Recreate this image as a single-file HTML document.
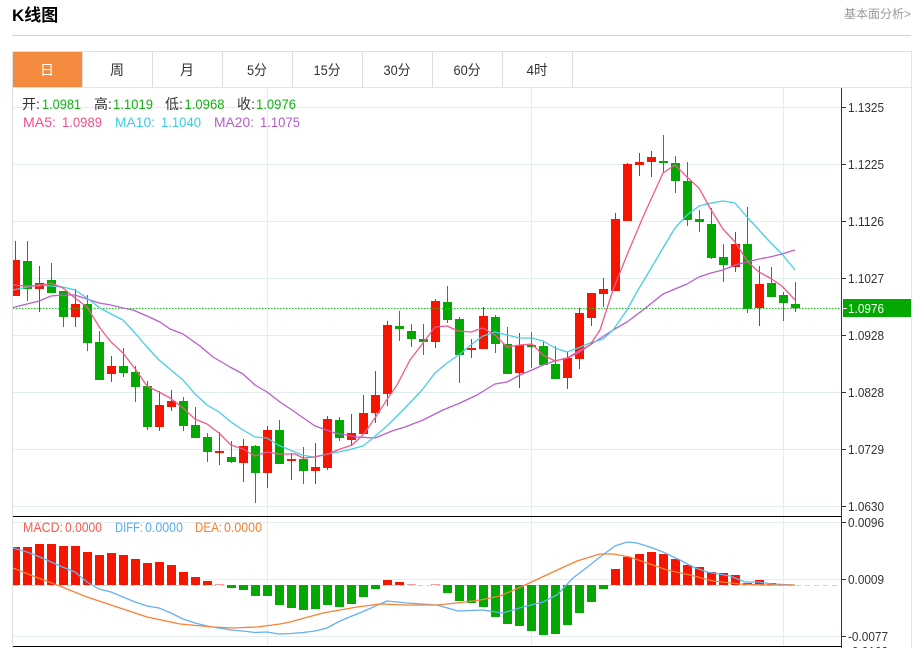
<!DOCTYPE html>
<html lang="zh"><head><meta charset="utf-8"><title>K线图</title>
<style>
html,body{margin:0;padding:0;background:#fff;width:916px;height:648px;overflow:hidden}
svg{display:block;font-family:"Liberation Sans","Noto Sans CJK SC",sans-serif}
.l{fill:none;stroke-width:1.3;stroke-linejoin:round}
.a{font-size:13px;fill:#333}
.t{font-size:14px;fill:#333;text-anchor:middle}
.s{font-size:14px}
</style></head><body>
<svg width="916" height="648" viewBox="0 0 916 648" xmlns="http://www.w3.org/2000/svg">
<defs><clipPath id="c"><rect x="13" y="88" width="828" height="560"/></clipPath></defs>
<text x="12" y="21" font-size="17" font-weight="700" fill="#000">K线图</text>
<text x="844" y="18" font-size="12" fill="#999">基本面分析&gt;</text>
<g shape-rendering="crispEdges">
<rect x="12" y="35" width="899" height="1" fill="#d0d0d0"/>
<rect x="12" y="51" width="900" height="1" fill="#e0e0e0"/>
<rect x="12" y="87" width="900" height="1" fill="#e4e4e4"/>
<rect x="12" y="51" width="1" height="597" fill="#e0e0e0"/>
<rect x="911" y="51" width="1" height="597" fill="#e4e4e4"/>
<rect x="13" y="52" width="69" height="35" fill="#f58b3f"/>
<path d="M82.5 52V87M152.5 52V87M222.5 52V87M292.5 52V87M362.5 52V87M432.5 52V87M502.5 52V87M572.5 52V87" stroke="#ddd" fill="none"/>
<path d="M13 107.5H841M13 164.5H841M13 221.5H841M13 278.5H841M13 335.5H841M13 392.5H841M13 449.5H841M13 506.5H841M13 522.5H841M13 579.5H841M13 636.5H841M267.5 88V646M531.5 88V646M783.5 88V646" stroke="#e3ecf3" fill="none"/>
</g>
<text class="t" x="47" y="75" style="fill:#fff">日</text>
<text class="t" x="117" y="75">周</text>
<text class="t" x="187" y="75">月</text>
<text class="t" x="257" y="75" textLength="20" lengthAdjust="spacingAndGlyphs">5分</text>
<text class="t" x="327" y="75" textLength="27" lengthAdjust="spacingAndGlyphs">15分</text>
<text class="t" x="397" y="75" textLength="27" lengthAdjust="spacingAndGlyphs">30分</text>
<text class="t" x="467" y="75" textLength="27" lengthAdjust="spacingAndGlyphs">60分</text>
<text class="t" x="537" y="75" textLength="21" lengthAdjust="spacingAndGlyphs">4时</text>

<g clip-path="url(#c)" shape-rendering="crispEdges">
<path fill="none" stroke="#f51500" d="M15.5 241V296M39.5 266V312M75.5 289V327M111.5 356V382M159.5 391V431M171.5 390V411M219.5 432V465M243.5 439V482M267.5 426V488M291.5 453V480M315.5 443V484M327.5 416V470M351.5 414V446M363.5 395V434M375.5 371V423M387.5 321V406M435.5 299V348M471.5 339V358M483.5 307V349M519.5 333V388M567.5 352V389M579.5 308V369M591.5 293V326M603.5 278V307M615.5 213V291M627.5 163V221M639.5 153V176M651.5 151V177M735.5 232V272M759.5 266V326"/>
<path fill="none" stroke="#03a803" d="M27.5 241V301M51.5 263V293M63.5 291V327M87.5 295V351M99.5 331V380M123.5 348V377M135.5 366V402M147.5 381V430M183.5 397V431M195.5 407V438M207.5 433V462M231.5 441V463M255.5 445V503M279.5 420V464M303.5 447V484M339.5 417V441M399.5 311V341M411.5 324V347M423.5 324V355M447.5 286V323M459.5 317V383M495.5 315V353M507.5 327V374M531.5 332V368M543.5 341V365M555.5 346V379M663.5 135V173M675.5 156V193M687.5 162V226M699.5 210V232M711.5 208V259M723.5 244V282M747.5 207V313M771.5 267V297M783.5 292V321M795.5 282V312"/>
<path fill="#f51500" d="M11 260h9v36h-9zM35 283h9v6h-9zM71 304h9v13h-9zM107 366h9v8h-9zM155 405h9v22h-9zM167 401h9v6h-9zM215 451h9v2h-9zM239 446h9v17h-9zM263 430h9v43h-9zM287 459h9v2h-9zM311 467h9v4h-9zM323 419h9v49h-9zM347 433h9v7h-9zM359 413h9v21h-9zM371 395h9v18h-9zM383 325h9v69h-9zM431 301h9v41h-9zM467 348h9v2h-9zM479 316h9v33h-9zM515 345h9v28h-9zM563 358h9v20h-9zM575 313h9v46h-9zM587 293h9v25h-9zM599 289h9v5h-9zM611 219h9v72h-9zM623 164h9v57h-9zM635 162h9v3h-9zM647 157h9v5h-9zM731 244h9v23h-9zM755 284h9v24h-9z"/>
<path fill="#03a803" d="M23 261h9v28h-9zM47 280h9v13h-9zM59 291h9v26h-9zM83 304h9v39h-9zM95 342h9v38h-9zM119 366h9v7h-9zM131 372h9v15h-9zM143 386h9v41h-9zM179 401h9v25h-9zM191 425h9v13h-9zM203 437h9v15h-9zM227 457h9v5h-9zM251 446h9v27h-9zM275 430h9v34h-9zM299 459h9v12h-9zM335 420h9v18h-9zM395 326h9v3h-9zM407 331h9v8h-9zM419 339h9v3h-9zM443 302h9v18h-9zM455 319h9v36h-9zM491 317h9v27h-9zM503 344h9v30h-9zM527 345h9v2h-9zM539 346h9v19h-9zM551 364h9v15h-9zM659 161h9v2h-9zM671 163h9v18h-9zM683 181h9v39h-9zM695 219h9v3h-9zM707 224h9v34h-9zM719 257h9v8h-9zM743 244h9v65h-9zM767 283h9v14h-9zM779 295h9v8h-9zM791 304h9v4h-9z"/>
</g>
<path d="M13 308.5H841" stroke="#1fc21f" stroke-dasharray="1.5 1.5" fill="none"/>
<g clip-path="url(#c)">
<path class="l" stroke="#b95fcf" d="M13 307.5L27 304L39 301L51 296L63 295L75 295L87 299L99 303L111 305L123 308L133 310L147 316L160 322L170 329L183 334L200 346L213 357L230 367L243 374L255 385L267 392L280 402L292 410L302 417L315 426L335 433L357 437L375 438L392 431L405 427L423 420L443 410L460 403L477 395L495 384L507 382L520 375L532 370L543 365L555 361L567 358L578 353L590 345L613 330L627 322L643 310L663 294L675 289L687 284L699 277L711 273L723 270L735 265L747 262L759 259L770 257L782 254L795 250"/>
<path class="l" stroke="#45cfe3" d="M13 290L27 287L39 285L51 286L63 287L75 290L87 298L100 308L111 314L123 320L135 333L147 347L159 360L171 370L183 380L195 394L207 405L219 412L231 422L243 430L255 437L267 438L278 445L290 450L302 455L313 457L328 454L348 450L363 446L373 438L388 425L405 408L422 390L435 373L447 363L460 354L472 344L483 336L495 332L507 335L520 338L532 338L543 341L555 348L567 352L578 348L590 343L603 339L613 330L627 310L638 290L650 270L663 248L675 228L687 215L699 206L711 203L723 201L735 203L747 217L759 230L770 242L782 254L795 270"/>
<path class="l" stroke="#f4598a" d="M13 285L27 286L39 286L51 283L63 288L75 298L87 307L100 328L111 342L123 353L136 370L147 386L159 392L170 398L183 408L195 419L207 424L219 433L231 445L243 449L255 456L267 452L279 454L295 454L303 458L315 457L328 454L340 449L352 445L363 435L375 418L388 398L397 385L410 360L423 343L435 327L447 326L458 331L471 332L483 328L495 335L507 347L520 345L532 344L543 355L555 361L567 358L577 352L590 345L600 330L613 290L627 255L643 217L663 173L675 165L687 177L699 188L710 208L723 229L735 242L748 262L759 272L770 278L782 286L795 300"/>
</g>

<g shape-rendering="crispEdges" clip-path="url(#c)">
<path d="M13 516.5H841M13 646.5H841" stroke="#000" fill="none"/>
<path d="M13 585.5H841" stroke="#aedcf2" stroke-dasharray="5 4" fill="none"/>
<path fill="#f51500" d="M11 547h9v38h-9zM23 547h9v38h-9zM35 544h9v41h-9zM47 544h9v41h-9zM59 546h9v39h-9zM71 546h9v39h-9zM83 552h9v33h-9zM95 555h9v30h-9zM107 553h9v32h-9zM119 555h9v30h-9zM131 559h9v26h-9zM143 563h9v22h-9zM155 562h9v23h-9zM167 565h9v20h-9zM179 572h9v13h-9zM191 577h9v8h-9zM203 581h9v4h-9zM383 580h9v5h-9zM395 582h9v3h-9zM611 569h9v16h-9zM623 557h9v28h-9zM635 554h9v31h-9zM647 552h9v33h-9zM659 554h9v31h-9zM671 559h9v26h-9zM683 565h9v20h-9zM695 567h9v18h-9zM707 572h9v13h-9zM719 573h9v12h-9zM731 575h9v10h-9zM743 583h9v2h-9zM755 580h9v5h-9zM767 583h9v2h-9z"/>
<path fill="#f5a09a" d="M215 584h9v1h-9zM407 584h9v1h-9zM431 584h9v1h-9zM779 584h9v1h-9z"/>
<path fill="#03a803" d="M227 585h9v3h-9zM239 585h9v5h-9zM251 585h9v11h-9zM263 585h9v11h-9zM275 585h9v20h-9zM287 585h9v23h-9zM299 585h9v25h-9zM311 585h9v24h-9zM323 585h9v20h-9zM335 585h9v22h-9zM347 585h9v19h-9zM359 585h9v12h-9zM371 585h9v4h-9zM443 585h9v8h-9zM455 585h9v16h-9zM467 585h9v18h-9zM479 585h9v22h-9zM491 585h9v32h-9zM503 585h9v39h-9zM515 585h9v41h-9zM527 585h9v46h-9zM539 585h9v50h-9zM551 585h9v49h-9zM563 585h9v40h-9zM575 585h9v28h-9zM587 585h9v17h-9zM599 585h9v4h-9z"/>
</g>
<g clip-path="url(#c)">
<path class="l" stroke="#63b1f5" d="M13 548L27 552L40 557L60 566L75 572L87 582L99 589L111 592L123 597L135 602L147 606L159 608L171 613L183 619L195 623L207 626L219 628L231 630L243 631L255 632.5L267 632L279 634L291 633.5L303 632.5L315 631L327 628L338 622L347 618L362 612L387 601L407 603L437 605L458 611L483 610L503 613L523 607L543 602L557 595L573 578L590 565L600 557L615 546L627 542L637 543L650 547L663 552L680 560L693 567L707 572L730 576L745 582L757 582L773 584L795 585"/>
<path class="l" stroke="#f98235" d="M13 568L33 576L57 585L87 597L117 607L147 617L180 624L213 627L233 628L257 627L280 624L290 622L323 613L357 607L380 604L407 605L437 605L457 603L480 600L500 596L523 586L553 572L577 561L590 557L600 554L613 554L630 557L647 563L667 570L690 575L713 581L740 584L767 585L795 585"/>
</g>

<g shape-rendering="crispEdges">
<rect x="843" y="299" width="68" height="18" fill="#03a803"/>
<path d="M841.5 88V648" stroke="#333" fill="none"/>
<path d="M842 107.5h4M842 164.5h4M842 221.5h4M842 278.5h4M842 335.5h4M842 392.5h4M842 449.5h4M842 506.5h4M842 522.5h4M842 579.5h4M842 636.5h4" stroke="#333" fill="none"/>
<path d="M843 308.5h4" stroke="#fff" fill="none"/>
</g>
<g lengthAdjust="spacingAndGlyphs">
<text class="a" x="848" y="112" textLength="36" lengthAdjust="spacingAndGlyphs">1.1325</text>
<text class="a" x="848" y="169" textLength="36" lengthAdjust="spacingAndGlyphs">1.1225</text>
<text class="a" x="848" y="226" textLength="36" lengthAdjust="spacingAndGlyphs">1.1126</text>
<text class="a" x="848" y="283" textLength="36" lengthAdjust="spacingAndGlyphs">1.1027</text>
<text class="a" x="848" y="313" textLength="36" lengthAdjust="spacingAndGlyphs" style="fill:#fff">1.0976</text>
<text class="a" x="848" y="340" textLength="36" lengthAdjust="spacingAndGlyphs">1.0928</text>
<text class="a" x="848" y="397" textLength="36" lengthAdjust="spacingAndGlyphs">1.0828</text>
<text class="a" x="848" y="454" textLength="36" lengthAdjust="spacingAndGlyphs">1.0729</text>
<text class="a" x="848" y="511" textLength="36" lengthAdjust="spacingAndGlyphs">1.0630</text>
<text class="a" x="848" y="527" textLength="36" lengthAdjust="spacingAndGlyphs">0.0096</text>
<text class="a" x="848" y="584" textLength="36" lengthAdjust="spacingAndGlyphs">0.0009</text>
<text class="a" x="848" y="641" textLength="40" lengthAdjust="spacingAndGlyphs">-0.0077</text>
<text class="a" x="848" y="656" textLength="40" lengthAdjust="spacingAndGlyphs">-0.0163</text>
</g>

<g class="s" fill="#333">
<text x="22" y="109">开:</text><text x="94" y="109">高:</text><text x="165" y="109">低:</text><text x="237" y="109">收:</text>
</g>
<g class="s" fill="#14b014">
<text x="42" y="109" textLength="39" lengthAdjust="spacingAndGlyphs">1.0981</text><text x="113" y="109" textLength="40" lengthAdjust="spacingAndGlyphs">1.1019</text><text x="184.5" y="109" textLength="40" lengthAdjust="spacingAndGlyphs">1.0968</text><text x="256" y="109" textLength="40" lengthAdjust="spacingAndGlyphs">1.0976</text>
</g>
<g class="s" fill="#f0508a"><text x="23" y="127" textLength="33" lengthAdjust="spacingAndGlyphs">MA5:</text><text x="62" y="127" textLength="40" lengthAdjust="spacingAndGlyphs">1.0989</text></g>
<g class="s" fill="#3bcde0"><text x="115" y="127" textLength="40" lengthAdjust="spacingAndGlyphs">MA10:</text><text x="161" y="127" textLength="40" lengthAdjust="spacingAndGlyphs">1.1040</text></g>
<g class="s" fill="#b45cc8"><text x="214" y="127" textLength="40" lengthAdjust="spacingAndGlyphs">MA20:</text><text x="260" y="127" textLength="40" lengthAdjust="spacingAndGlyphs">1.1075</text></g>
<g class="s" fill="#f55a50"><text x="23" y="532" textLength="40" lengthAdjust="spacingAndGlyphs">MACD:</text><text x="65" y="532" textLength="37" lengthAdjust="spacingAndGlyphs">0.0000</text></g>
<g class="s" fill="#5aaef0"><text x="115" y="532" textLength="28" lengthAdjust="spacingAndGlyphs">DIFF:</text><text x="145" y="532" textLength="38" lengthAdjust="spacingAndGlyphs">0.0000</text></g>
<g class="s" fill="#f58030"><text x="195" y="532" textLength="27" lengthAdjust="spacingAndGlyphs">DEA:</text><text x="224" y="532" textLength="38" lengthAdjust="spacingAndGlyphs">0.0000</text></g>
</svg>
</body></html>
